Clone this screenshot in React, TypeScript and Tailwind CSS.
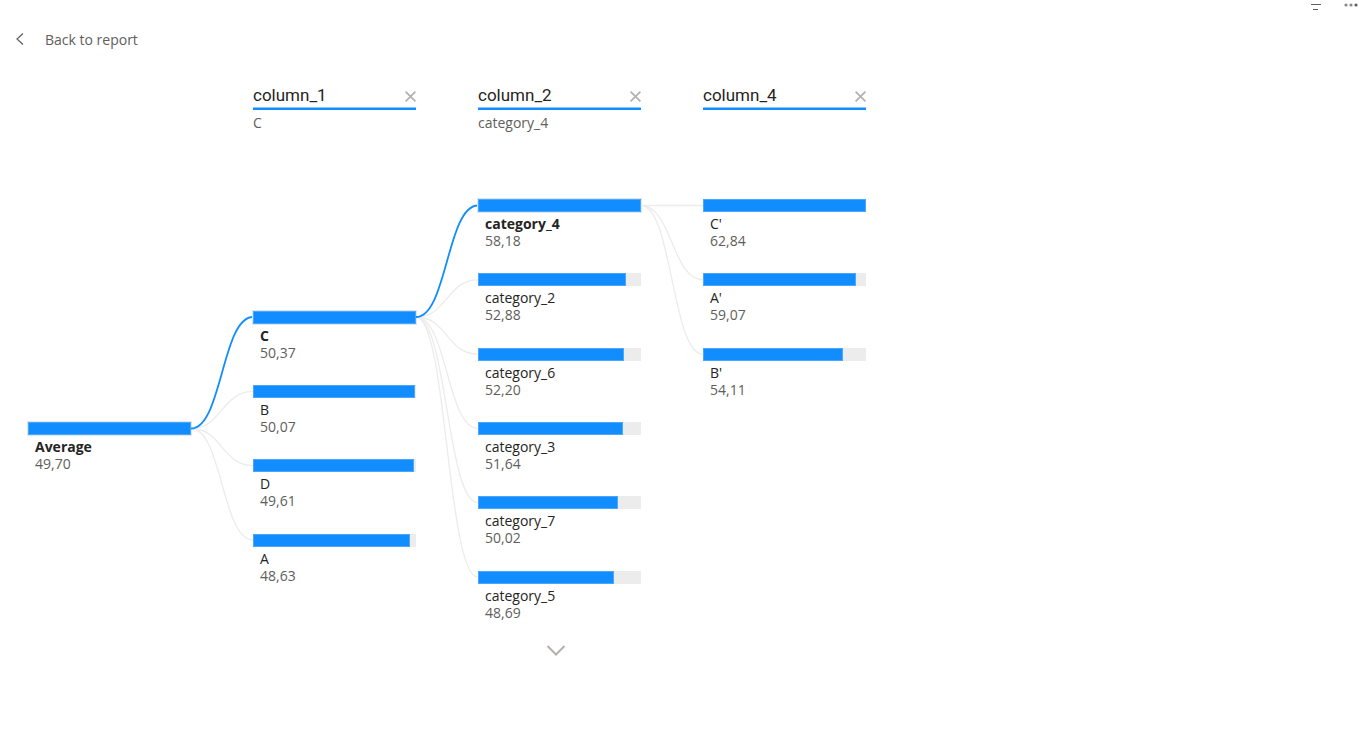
import React from "react";

type TreeNode = { label: string; value: number; selected?: boolean };
type Level = { field?: string; picked?: string; nodes: TreeNode[] };

const TREE_HEIGHT = 446;
const HALF_ROW = TREE_HEIGHT / 12;
const BAR_CENTER = 6.5;

const levels: Level[] = [
  { nodes: [{ label: "Average", value: 49.7, selected: true }] },
  {
    field: "column_1",
    picked: "C",
    nodes: [
      { label: "C", value: 50.37, selected: true },
      { label: "B", value: 50.07 },
      { label: "D", value: 49.61 },
      { label: "A", value: 48.63 },
    ],
  },
  {
    field: "column_2",
    picked: "category_4",
    nodes: [
      { label: "category_4", value: 58.18, selected: true },
      { label: "category_2", value: 52.88 },
      { label: "category_6", value: 52.2 },
      { label: "category_3", value: 51.64 },
      { label: "category_7", value: 50.02 },
      { label: "category_5", value: 48.69 },
    ],
  },
  {
    field: "column_4",
    nodes: [
      { label: "C'", value: 62.84 },
      { label: "A'", value: 59.07 },
      { label: "B'", value: 54.11 },
    ],
  },
];

// Half rows above the first node of each level.
const offsets = [6, 3, 0, 0];
const spacers = ["row-span-6", "row-span-3", "", ""];

const formatValue = (v: number) => v.toFixed(2).replace(".", ",");

function Node({ node, max }: { node: TreeNode; max: number }) {
  return (
    <button type="button" className="row-span-2 flex min-h-0 flex-col items-stretch text-left">
      <span
        className={
          node.selected
            ? "block h-[13px] bg-[#ececec] outline outline-[#dce7f1]"
            : "block h-[13px] bg-[#ececec]"
        }
      >
        <span
          className="block h-full border border-[#4ba7fb] bg-[#118dff]"
          style={{ width: `${(node.value / max) * 100}%` }}
        />
      </span>
      <span
        className={
          node.selected
            ? "mt-[3px] pl-[7px] text-[14px] leading-[17px] font-bold text-[#252423]"
            : "mt-[3px] pl-[7px] text-[14px] leading-[17px] text-[#252423]"
        }
      >
        {node.label}
      </span>
      <span className="pl-[7px] text-[14px] leading-[18px] text-[#605e5c]">
        {formatValue(node.value)}
      </span>
    </button>
  );
}

function Links({ from, to }: { from: number; to: number }) {
  const sourceIndex = levels[from].nodes.findIndex((n) => n.selected);
  const y0 = (offsets[from] + sourceIndex * 2) * HALF_ROW + BAR_CENTER;
  const links = levels[to].nodes.map((n, i) => {
    const y1 = (offsets[to] + i * 2) * HALF_ROW + BAR_CENTER;
    return { d: `M0 ${y0}C31 ${y0} 31 ${y1} 62 ${y1}`, selected: !!n.selected };
  });
  return (
    <svg viewBox="0 0 62 446" className="h-[446px] w-[62px] shrink-0" fill="none" aria-hidden="true">
      {links
        .slice()
        .reverse()
        .map((l) => (
          <path
            key={l.d}
            d={l.d}
            stroke={l.selected ? "#118dff" : "#ececec"}
            strokeWidth={l.selected ? 1.8 : 1.3}
          />
        ))}
    </svg>
  );
}

function LevelHeader({ level }: { level: Level }) {
  return (
    <div className="w-[163px] shrink-0">
      {level.field && (
        <>
          <div className="flex h-[27px] items-center justify-between border-b-2 border-[#118dff] shadow-[inset_0_-1px_0_#88c6ff]">
            <h2 className="font-['Roboto',sans-serif] text-[17px] leading-[23px] text-[#252423]">
              {level.field}
            </h2>
            <button type="button" aria-label={`Remove ${level.field}`} className="pt-[2px]">
              <svg width="11" height="11" viewBox="0 0 11 11" fill="none" stroke="#b3b0ad" strokeWidth="1.7" aria-hidden="true">
                <path d="M.6.6l9.8 9.8M10.4.6L.6 10.4" />
              </svg>
            </button>
          </div>
          <p className="pt-[4px] text-[14px] leading-[18px] text-[#605e5c]">{level.picked}</p>
        </>
      )}
    </div>
  );
}

export default function App() {
  return (
    <div className="min-h-screen overflow-x-auto bg-white font-['Open_Sans','Noto_Sans',sans-serif]">
      <div className="flex h-[16px] justify-end gap-[21px]">
        <button type="button" aria-label="Filters" className="flex items-start pt-[3px]">
          <svg width="12" height="8" viewBox="0 0 12 8" stroke="#605e5c" aria-hidden="true">
            <path d="M1 1.5h10M3 6.5h5" />
          </svg>
        </button>
        <button type="button" aria-label="More options" className="flex items-start pt-[3px]">
          <svg width="16" height="4" viewBox="0 0 16 4" fill="#8a8886" aria-hidden="true">
            <circle cx="3" cy="2" r="1.6" />
            <circle cx="8" cy="2" r="1.6" />
            <circle cx="13" cy="2" r="1.6" fill="#605e5c" />
          </svg>
        </button>
      </div>
      <header className="flex h-[46px] items-center px-4">
        <button type="button" className="flex items-center gap-[21px] text-[14px] text-[#605e5c]">
          <svg width="8" height="12" viewBox="0 0 8 12" fill="none" stroke="#605e5c" strokeWidth="1.2" aria-hidden="true">
            <path d="M7 .5L1 6l6 5.500" />
          </svg>
          Back to report
        </button>
      </header>
      <main className="pt-[21px] pl-7">
        <div className="flex h-[116px] gap-[62px]">
          {levels.map((level, i) => (
            <LevelHeader key={i} level={level} />
          ))}
        </div>
        <div className="flex">
          {levels.map((level, i) => (
            <React.Fragment key={i}>
              {i > 0 && <Links from={i - 1} to={i} />}
              <div className="w-[163px] shrink-0">
                <div className="grid h-[446px] grid-rows-12">
                  {spacers[i] && <div className={spacers[i]} />}
                  {level.nodes.map((n) => (
                    <Node key={n.label} node={n} max={level.nodes[0].value} />
                  ))}
                </div>
                {level.nodes.length > 5 && (
                  <button type="button" aria-label="Show more" className="flex w-full justify-center pr-[8px]">
                    <svg width="20" height="12" viewBox="0 0 20 12" fill="none" stroke="#b3b0ad" strokeWidth="2" aria-hidden="true">
                      <path d="M1.500 1L10 9.500 18.500 1" />
                    </svg>
                  </button>
                )}
              </div>
            </React.Fragment>
          ))}
        </div>
      </main>
    </div>
  );
}
